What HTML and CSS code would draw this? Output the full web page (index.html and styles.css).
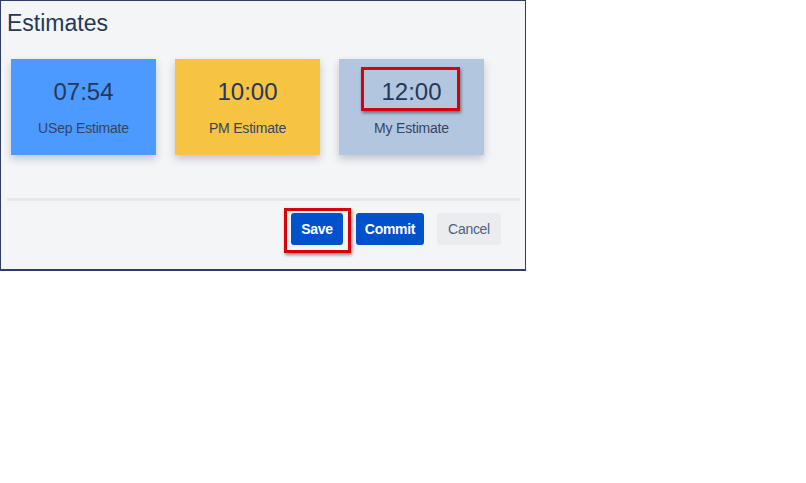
FILE: index.html
```html
<!DOCTYPE html>
<html lang="en">
<head>
    <meta charset="UTF-8">
    <title>Estimates</title>
    <link rel="stylesheet" href="styles.css">
</head>
<body>

<div class="panel">
    <h2 class="title">Estimates</h2>

    <div class="cards">
        <div class="card card-usep">
            <div class="time">07:54</div>
            <div class="label">USep Estimate</div>
        </div>
        <div class="card card-pm">
            <div class="time">10:00</div>
            <div class="label">PM Estimate</div>
        </div>
        <div class="card card-mine">
            <div class="time"><span class="marked">12:00</span></div>
            <div class="label">My Estimate</div>
        </div>
    </div>

    <div class="divider"></div>

    <div class="actions">
        <button class="btn btn-primary btn-save marked-btn">Save</button>
        <button class="btn btn-primary btn-commit">Commit</button>
        <button class="btn btn-subtle">Cancel</button>
    </div>
</div>

</body>
</html>
```

FILE: styles.css
```css
* {
    margin: 0;
    padding: 0;
    box-sizing: border-box;
}

body {
    font-family: 'Liberation Sans', Arial, sans-serif;
    background: #ffffff;
    color: #253858;
}

.panel {
    width: 526px;
    height: 271px;
    border: 1px solid #2d3c68;
    border-bottom-width: 2px;
    background: #f4f5f7;
    display: flex;
    flex-direction: column;
}

.title {
    font-size: 23px;
    font-weight: 400;
    color: #253858;
    padding: 9px 0 0 6px;
    line-height: 26px;
}

/* Estimate cards */
.cards {
    display: flex;
    gap: 19px;
    padding-left: 10px;
    margin-top: 23px;
}

.card {
    width: 145px;
    height: 96px;
    box-shadow: 0 4px 8px rgba(9, 30, 66, 0.22);
    display: flex;
    flex-direction: column;
    align-items: center;
    text-align: center;
}

.card-usep {
    background: #4c9aff;
}

.card-pm {
    background: #f6c343;
}

.card-mine {
    background: #b3c6df;
}

.time {
    font-size: 24px;
    line-height: 28px;
    margin-top: 19px;
    color: #253858;
}

.label {
    font-size: 14px;
    letter-spacing: -0.2px;
    color: #344563;
    margin-top: 14px;
}

.marked {
    position: relative;
    display: inline-block;
}

.marked::after {
    content: "";
    position: absolute;
    left: -20px;
    right: -18px;
    top: -11px;
    bottom: -5px;
    border: 3px solid #d9000d;
    box-shadow: 1px 2px 3px rgba(0, 0, 0, 0.45);
}

.divider {
    height: 3px;
    background: #e6e8ec;
    margin: 43px 5px 0 6px;
}

/* Buttons */
.actions {
    display: flex;
    justify-content: flex-end;
    gap: 13px;
    padding-right: 24px;
    margin-top: 12px;
}

.btn {
    height: 32px;
    padding: 0;
    border: none;
    border-radius: 3px;
    font-family: 'Liberation Sans', Arial, sans-serif;
    font-size: 14px;
    letter-spacing: -0.3px;
}

.btn-primary {
    background: #0052cc;
    color: #ffffff;
    font-weight: 700;
}

.btn-save {
    width: 52px;
}

.btn-commit {
    width: 68px;
}

.btn-subtle {
    width: 64px;
    background: #ebecf0;
    color: #505f79;
}

.marked-btn {
    position: relative;
}

.marked-btn::after {
    content: "";
    position: absolute;
    left: -7px;
    right: -8px;
    top: -5px;
    bottom: -8px;
    border: 3px solid #d9000d;
    box-shadow: 1px 2px 3px rgba(0, 0, 0, 0.45);
}
```
